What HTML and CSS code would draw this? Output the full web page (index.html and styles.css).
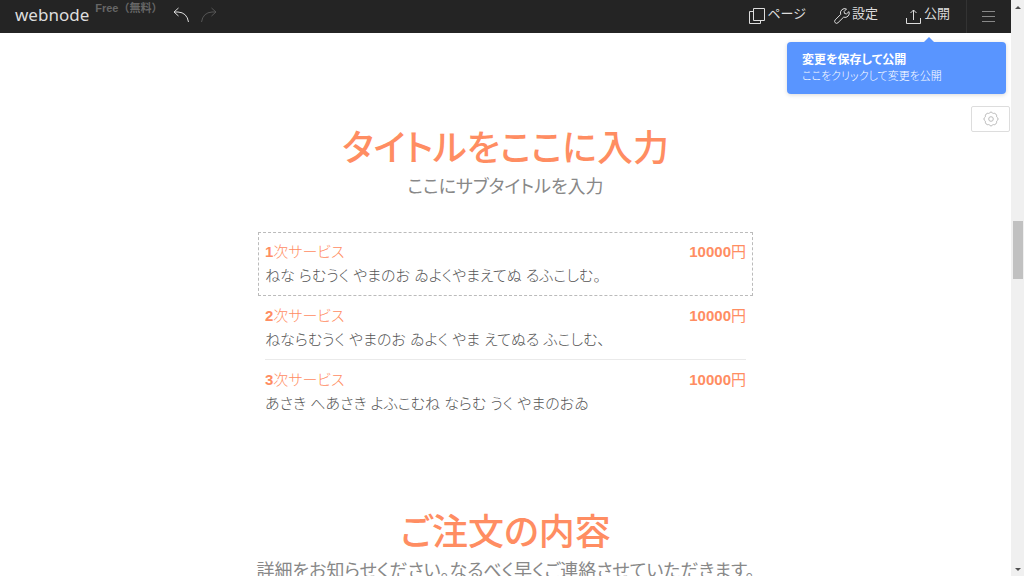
FILE: index.html
```html
<!DOCTYPE html>
<html lang="ja">
<head>
    <meta charset="UTF-8">
    <meta name="viewport" content="width=device-width, initial-scale=1.0">
    <title>Webnode</title>
    <link rel="stylesheet" href="styles.css">
</head>
<body>
    <div class="editor">
        <header class="topbar">
            <a class="logo" href="#">webnode</a>
            <span class="plan">Free（無料）</span>
            <button class="history undo" type="button" aria-label="元に戻す">
                <svg width="17" height="16" viewBox="0 0 17 16"><path d="M5.500 1L1 5l4.500 4M1 5h4q9 .5 10.500 10"/></svg>
            </button>
            <button class="history redo" type="button" aria-label="やり直し" disabled>
                <svg width="17" height="16" viewBox="0 0 17 16"><path d="M11.500 1L16 5l-4.500 4M16 5h-4q-9 .5-10.500 10"/></svg>
            </button>
            <nav class="actions">
                <button class="action" type="button">
                    <svg width="16" height="16" viewBox="0 0 16 16"><path d="M4.500 .5h11v12h-11zM4.500 3.500h-4v12h11v-3"/></svg>
                    <span>ページ</span>
                </button>
                <button class="action" type="button">
                    <svg width="16" height="16" viewBox="0 0 16 16"><path d="M12.500 1a4.300 4.300 0 0 0-5.800 5.400L1.200 11.900a1.900 1.900 0 0 0 2.800 2.800l5.600-5.500A4.300 4.300 0 0 0 15 3.600l-2.500 2.300-2-.4-.4-2z"/></svg>
                    <span>設定</span>
                </button>
                <button class="action" type="button">
                    <svg width="16" height="16" viewBox="0 0 16 16"><path d="M.5 10v5.500h14V10M7.500 12V2M4.500 5l3-3 3 3"/></svg>
                    <span>公開</span>
                </button>
            </nav>
            <button class="menu" type="button" aria-label="メニュー">
                <svg width="14" height="12" viewBox="0 0 14 12"><path d="M0 1.500h13M0 6.500h13M0 11.500h13"/></svg>
            </button>
            <div class="tip" role="status">
                <strong>変更を保存して公開</strong>
                <span>ここをクリックして変更を公開</span>
            </div>
        </header>

        <button class="section-settings" type="button" aria-label="セクション設定">
            <svg width="16" height="16" viewBox="0 0 16 16"><path d="M8 1q1 0 1.500 1.200 1 .4 2.300.1 1.200.6 1.800 1.900-.2 1.200.2 1.900 1.300.8 1.300 1.900t-1.300 1.900q-.4.700-.2 1.900-.6 1.300-1.800 1.900-1.300-.3-2.300.1Q9 15 8 15t-1.500-1.200q-1-.4-2.300-.1-1.200-.6-1.800-1.900.2-1.200-.2-1.900Q.9 9.100.9 8t1.300-1.900q.4-.7.200-1.900.6-1.300 1.800-1.900 1.300.3 2.300-.1Q7 1 8 1z"/><circle cx="8" cy="8" r="2.300"/></svg>
        </button>

        <main>
            <section class="block">
                <h1>タイトルをここに入力</h1>
                <p class="subtitle">ここにサブタイトルを入力</p>
                <div class="services">
                    <article class="service selected">
                        <h2><b>1</b>次サービス</h2>
                        <span class="price"><b>10000</b>円</span>
                        <p>ねな らむうく やまのお ゐよくやまえてぬ るふこしむ。</p>
                    </article>
                    <article class="service">
                        <h2><b>2</b>次サービス</h2>
                        <span class="price"><b>10000</b>円</span>
                        <p>ねならむうく やまのお ゐよく やま えてぬる ふこしむ、</p>
                    </article>
                    <article class="service">
                        <h2><b>3</b>次サービス</h2>
                        <span class="price"><b>10000</b>円</span>
                        <p>あさき へあさき よふこむね ならむ うく やまのおゐ</p>
                    </article>
                </div>
            </section>
            <section class="block">
                <h1>ご注文の内容</h1>
                <p class="subtitle">詳細をお知らせください。なるべく早くご連絡させていただきます。</p>
            </section>
        </main>
    </div>
    <div class="scrollbar" aria-hidden="true">
        <i class="arrow up"></i>
        <i class="thumb"></i>
        <i class="arrow down"></i>
    </div>
</body>
</html>
```
FILE: styles.css
```css
* {
    box-sizing: border-box;
}

body {
    margin: 0;
    height: 100vh;
    display: grid;
    grid-template-columns: 1fr 13px;
    overflow: hidden;
    background: #fff;
    font-family: "Liberation Sans", "Noto Sans CJK JP", sans-serif;
    font-feature-settings: "palt";
}

h1, h2, p {
    margin: 0;
}

button {
    padding: 0;
    border: 0;
    background: none;
    font: inherit;
    font-feature-settings: inherit;
    color: inherit;
}

svg {
    display: block;
    fill: none;
    stroke: currentColor;
}

.editor {
    position: relative;
    height: 100vh;
    overflow: hidden;
}

/* top bar */
.topbar {
    position: relative;
    display: flex;
    align-items: center;
    height: 33px;
    padding-left: 15px;
    background: #242424;
    color: #ddd;
}

.logo {
    padding-bottom: 4px;
    font-family: "Noto Sans", sans-serif;
    font-size: 17px;
    line-height: 24px;
    color: #ddd;
    text-decoration: none;
}

.plan {
    align-self: flex-start;
    margin-left: 6px;
    font-size: 11px;
    line-height: 16px;
    font-weight: 700;
    font-feature-settings: normal;
    color: #666;
}

.history {
    margin-left: 10px;
    padding-bottom: 4px;
}

.redo {
    color: #555;
}

.actions {
    display: flex;
    gap: 28px;
    margin-left: auto;
    padding: 0 16px 2px 0;
}

.action {
    display: flex;
    align-items: center;
    gap: 2px;
    font-size: 13px;
    line-height: 20px;
    font-weight: 400;
}

.action span {
    padding-bottom: 3px;
}

.menu {
    display: grid;
    place-items: center;
    width: 45px;
    height: 33px;
    padding-bottom: 2px;
    border-left: 1px solid #333;
    color: #888;
}

.tip {
    position: absolute;
    z-index: 2;
    top: 42px;
    right: 5px;
    width: 219px;
    padding: 10px 15px;
    border-radius: 4px;
    background: #5995ff;
    box-shadow: 0 1px 4px rgba(0, 0, 0, .15);
    font-size: 12px;
    line-height: 16px;
    color: #fff;
}

.tip::before {
    content: "";
    position: absolute;
    top: -5px;
    right: 71px;
    border: 6px solid transparent;
    border-top: 0;
    border-bottom-color: #5995ff;
}

.tip strong, .tip span {
    display: block;
}

.tip span {
    font-size: 11px;
    font-weight: 300;
}

.section-settings {
    position: absolute;
    top: 106px;
    right: 1px;
    display: grid;
    place-items: center;
    width: 39px;
    height: 26px;
    border: 1px solid #ddd;
    border-radius: 2px;
    background: #fff;
    color: #bbb;
}

/* page content */
.block {
    padding: 94px 24px 0;
}

.block + .block {
    padding-top: 87px;
}

h1 {
    font-size: 36px;
    line-height: 44px;
    font-weight: 500;
    text-align: center;
    color: #ff8d62;
}

.subtitle {
    padding-top: 4px;
    font-size: 18px;
    line-height: 24px;
    text-align: center;
    color: #888;
}

.services {
    max-width: 495px;
    margin: 33px auto 0;
}

.service {
    display: grid;
    grid-template-columns: 1fr auto;
    margin: 0 7px;
    padding: 8px 0 7px;
    border-bottom: 1px solid #eaeaea;
    font-size: 15px;
    line-height: 24px;
    font-weight: 300;
    color: #555;
}

.service:last-child {
    border-color: transparent;
}

.service.selected {
    margin: 0;
    padding: 7px 6px;
    border: 1px dashed #bbb;
}

.service h2 {
    font-size: 15px;
    font-weight: 300;
    color: #ff8d62;
}

.service b {
    font-weight: 700;
}

.service p {
    grid-column: 1 / -1;
}

.price {
    font-weight: 400;
    color: #ff8d62;
}

/* scrollbar */
.scrollbar {
    display: grid;
    grid-template-rows: 14px 1fr 14px;
    justify-items: center;
    align-items: center;
    background: #f0f0f0;
}

.thumb {
    align-self: start;
    width: 10px;
    height: 10vh;
    margin-top: 36vh;
    background: #c1c1c1;
}

.arrow {
    border: 3px solid transparent;
}

.arrow.up {
    border-top: 0;
    border-bottom-color: #505050;
}

.arrow.down {
    border-bottom: 0;
    border-top-color: #505050;
}
```
